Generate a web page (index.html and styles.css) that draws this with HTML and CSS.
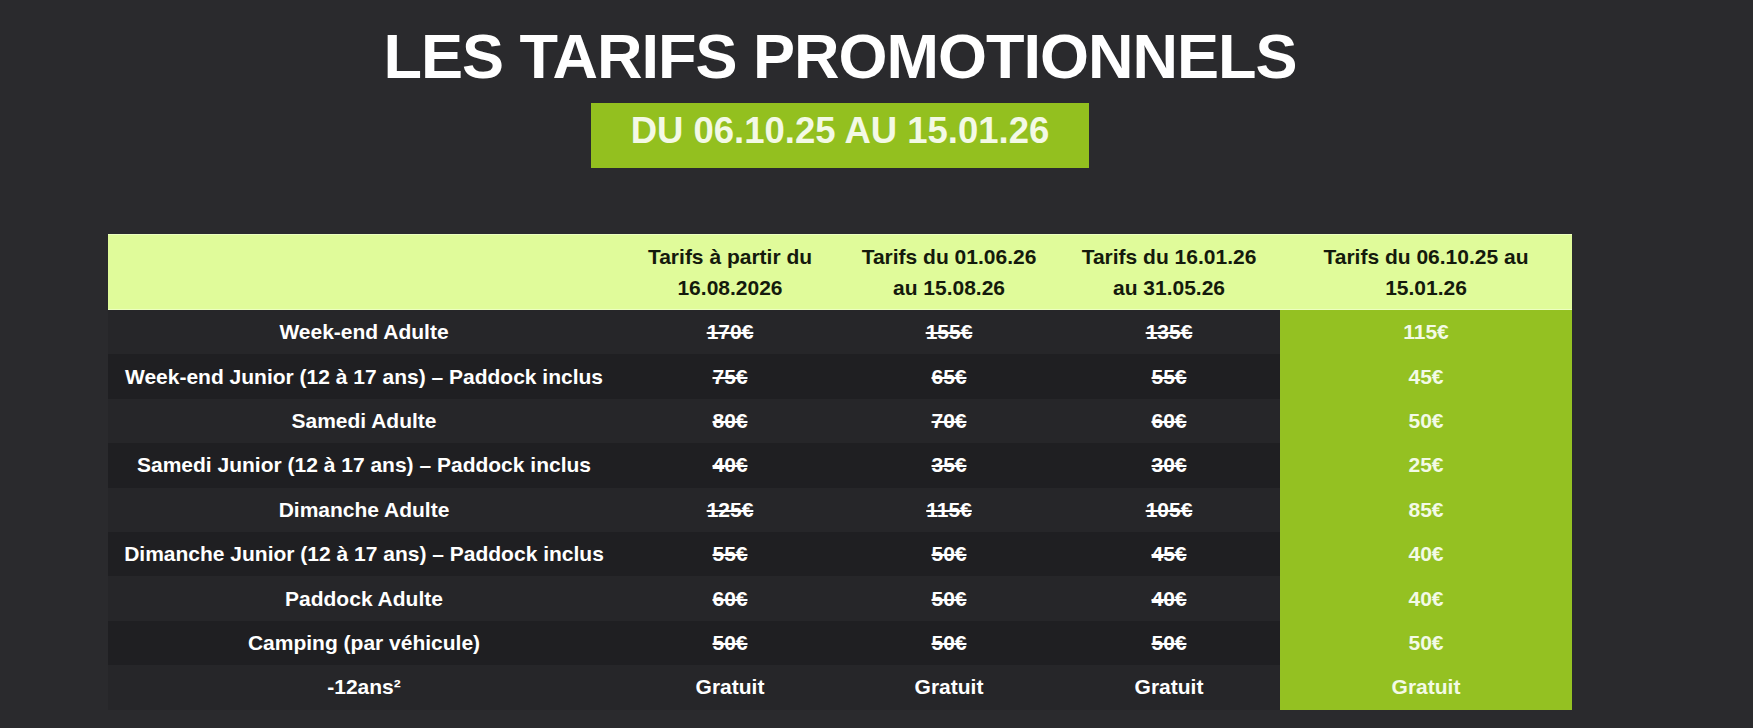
FILE: index.html
```html
<!DOCTYPE html>
<html lang="fr">
<head>
<meta charset="utf-8">
<title>Les tarifs promotionnels</title>
<link rel="stylesheet" href="styles.css">
</head>
<body>
<main class="page">
  <h1 class="title">LES TARIFS PROMOTIONNELS</h1>
  <div class="period">DU 06.10.25 AU 15.01.26</div>
  <table class="prices">
    <colgroup>
      <col class="col-label">
      <col class="col-a">
      <col class="col-b">
      <col class="col-c">
      <col class="col-promo">
    </colgroup>
    <thead>
      <tr class="head">
        <th></th>
        <th>Tarifs à partir du<br>16.08.2026</th>
        <th>Tarifs du 01.06.26<br>au 15.08.26</th>
        <th>Tarifs du 16.01.26<br>au 31.05.26</th>
        <th>Tarifs du 06.10.25 au<br>15.01.26</th>
      </tr>
    </thead>
    <tbody>
      <tr><td>Week-end Adulte</td><td class="old">170€</td><td class="old">155€</td><td class="old">135€</td><td class="promo">115€</td></tr>
      <tr><td>Week-end Junior (12 à 17 ans) – Paddock inclus</td><td class="old">75€</td><td class="old">65€</td><td class="old">55€</td><td class="promo">45€</td></tr>
      <tr><td>Samedi Adulte</td><td class="old">80€</td><td class="old">70€</td><td class="old">60€</td><td class="promo">50€</td></tr>
      <tr><td>Samedi Junior (12 à 17 ans) – Paddock inclus</td><td class="old">40€</td><td class="old">35€</td><td class="old">30€</td><td class="promo">25€</td></tr>
      <tr><td>Dimanche Adulte</td><td class="old">125€</td><td class="old">115€</td><td class="old">105€</td><td class="promo">85€</td></tr>
      <tr><td>Dimanche Junior (12 à 17 ans) – Paddock inclus</td><td class="old">55€</td><td class="old">50€</td><td class="old">45€</td><td class="promo">40€</td></tr>
      <tr><td>Paddock Adulte</td><td class="old">60€</td><td class="old">50€</td><td class="old">40€</td><td class="promo">40€</td></tr>
      <tr><td>Camping (par véhicule)</td><td class="old">50€</td><td class="old">50€</td><td class="old">50€</td><td class="promo">50€</td></tr>
      <tr><td>-12ans²</td><td>Gratuit</td><td>Gratuit</td><td>Gratuit</td><td class="promo">Gratuit</td></tr>
    </tbody>
  </table>
</main>
</body>
</html>
```

FILE: styles.css
```css
html, body {
  margin: 0;
  padding: 0;
}

body {
  background: #2a2a2d;
  font-family: "Liberation Sans", Arial, sans-serif;
  color: #ffffff;
}

.page {
  width: 1464px;
  margin-left: 108px;
  padding-top: 25px;
  display: flex;
  flex-direction: column;
  align-items: center;
}

.title {
  margin: 0;
  font-size: 63px;
  line-height: 63px;
  font-weight: 700;
  letter-spacing: -1px;
  color: #ffffff;
}

.period {
  margin-top: 15px;
  width: 498px;
  height: 65px;
  box-sizing: border-box;
  padding-top: 10px;
  background: #93c01f;
  color: #f3f9e6;
  font-size: 36.5px;
  line-height: 36px;
  font-weight: 700;
  text-align: center;
}

.prices {
  margin-top: 66px;
  width: 1464px;
  border-collapse: collapse;
  table-layout: fixed;
  font-size: 21px;
  font-weight: 700;
}

.col-label { width: 512px; }
.col-a { width: 220px; }
.col-b { width: 218px; }
.col-c { width: 222px; }
.col-promo { width: 292px; }

.head {
  background: #e0fb9a;
  height: 76px;
  box-shadow: inset 0 1px 0 #ecffc0, inset 0 -1px 0 #ecffc0;
}

.head th {
  padding: 7px 0;
  color: #141a0c;
  font-weight: 700;
  font-size: 21px;
  line-height: 31px;
  text-align: center;
}

.prices tbody tr {
  height: 44.4px;
}

.prices tbody tr:nth-child(odd) {
  background: #262629;
}

.prices tbody tr:nth-child(even) {
  background: #1f1f22;
}

.prices td {
  padding: 0;
  text-align: center;
  color: #ffffff;
  line-height: 24px;
}

.prices td.old {
  text-decoration: line-through;
  text-decoration-thickness: 2px;
}

.prices td.promo {
  background: #94c122;
  color: #f3fae6;
}
```
